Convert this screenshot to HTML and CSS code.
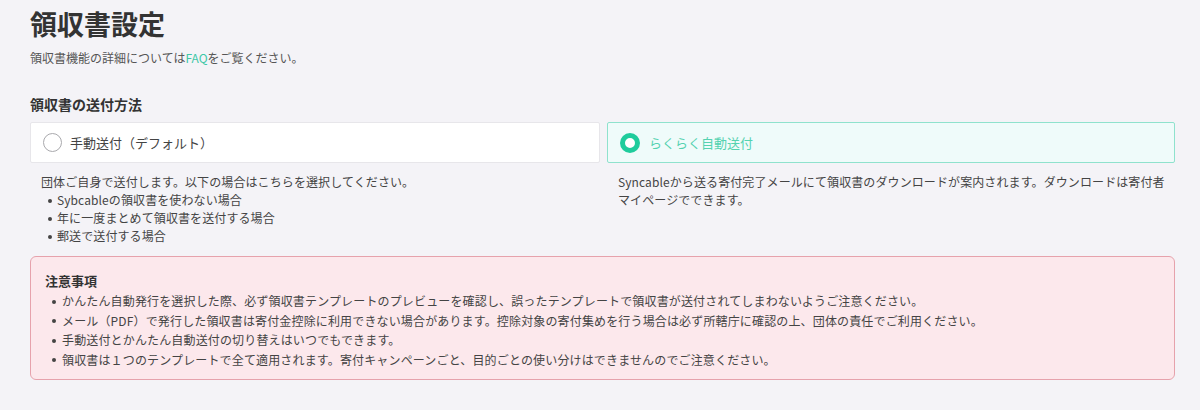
FILE: index.html
```html
<!DOCTYPE html>
<html lang="ja">
<head>
<meta charset="utf-8">
<title>領収書設定</title>
<link rel="stylesheet" href="styles.css">
</head>
<body>
<main class="page">
  <h1 class="title">領収書設定</h1>
  <p class="lead">領収書機能の詳細については<a class="link" href="#">FAQ</a>をご覧ください。</p>

  <h2 class="section-title">領収書の送付方法</h2>
  <div class="options">
    <div class="option">
      <label class="card">
        <span class="radio"></span>
        <span class="card-label">手動送付（デフォルト）</span>
      </label>
      <div class="desc">
        <p class="desc-text">団体ご自身で送付します。以下の場合はこちらを選択してください。</p>
        <ul class="bullets desc-list">
          <li>Sybcableの領収書を使わない場合</li>
          <li>年に一度まとめて領収書を送付する場合</li>
          <li>郵送で送付する場合</li>
        </ul>
      </div>
    </div>
    <div class="option">
      <label class="card card-active">
        <span class="radio radio-active"></span>
        <span class="card-label card-label-active">らくらく自動送付</span>
      </label>
      <div class="desc">
        <p class="desc-text">Syncableから送る寄付完了メールにて領収書のダウンロードが案内されます。ダウンロードは寄付者マイページでできます。</p>
      </div>
    </div>
  </div>

  <section class="notice">
    <h3 class="notice-title">注意事項</h3>
    <ul class="bullets notice-list">
      <li>かんたん自動発行を選択した際、必ず領収書テンプレートのプレビューを確認し、誤ったテンプレートで領収書が送付されてしまわないようご注意ください。</li>
      <li>メール（PDF）で発行した領収書は寄付金控除に利用できない場合があります。控除対象の寄付集めを行う場合は必ず所轄庁に確認の上、団体の責任でご利用ください。</li>
      <li>手動送付とかんたん自動送付の切り替えはいつでもできます。</li>
      <li>領収書は１つのテンプレートで全て適用されます。寄付キャンペーンごと、目的ごとの使い分けはできませんのでご注意ください。</li>
    </ul>
  </section>
</main>
</body>
</html>
```

FILE: styles.css
```css
* { box-sizing: border-box; }

html, body {
  margin: 0;
  padding: 0;
  background: #f4f3f7;
}

body {
  font-family: "Noto Sans CJK JP", "Noto Sans", sans-serif;
  color: #3a3a3a;
}

.page {
  padding: 0 25px 0 30px;
}

.title {
  margin: 0;
  font-size: 27px;
  line-height: 48px;
  font-weight: 700;
  color: #333;
}

.lead {
  margin: 0;
  font-size: 12px;
  line-height: 20px;
  color: #555;
}

.link {
  color: #3ec8a7;
  text-decoration: none;
}

.section-title {
  margin: 26px 0 8px;
  font-size: 14px;
  line-height: 20px;
  font-weight: 700;
  color: #333;
}

.options {
  display: grid;
  grid-template-columns: 570px 568px;
  column-gap: 7px;
}

.card {
  display: flex;
  align-items: center;
  gap: 8px;
  height: 41px;
  padding: 0 12px;
  background: #fff;
  border: 1px solid #e7e6ea;
  border-radius: 2px;
}

.card-active {
  background: #effbfa;
  border-color: #8fe2cd;
  gap: 9px;
}

.radio {
  width: 19px;
  height: 19px;
  border-radius: 50%;
  border: 1.5px solid #a9a9ad;
  background: #fff;
  flex: none;
}

.radio-active {
  width: 20px;
  height: 20px;
  border: 5px solid #1fcc9c;
  background: #fff;
}

.card-label {
  font-size: 13px;
  line-height: 20px;
  color: #444;
}

.card-label-active {
  color: #55d2b0;
}

.desc {
  padding: 10px 5px 0 11px;
  font-size: 12px;
  line-height: 18px;
  letter-spacing: 0.1px;
  color: #444;
}

.desc-text {
  margin: 0;
}

.bullets {
  list-style: none;
  margin: 0;
  padding-left: 7px;
}

.bullets li::before {
  content: "";
  display: inline-block;
  width: 4px;
  height: 4px;
  border-radius: 50%;
  background: #444;
  vertical-align: middle;
  margin: -2px 5px 0 0;
}

.notice {
  margin-top: 11px;
  padding: 14px 14px 10px;
  background: #fce8ec;
  border: 1px solid #e6a2ac;
  border-radius: 6px;
}

.notice-title {
  margin: 0;
  font-size: 13px;
  line-height: 20px;
  font-weight: 700;
  color: #333;
}

.notice-list {
  font-size: 12px;
  line-height: 19.5px;
  letter-spacing: 0.15px;
  color: #444;
}

.notice-list li::before {
  margin-right: 6px;
}
```
